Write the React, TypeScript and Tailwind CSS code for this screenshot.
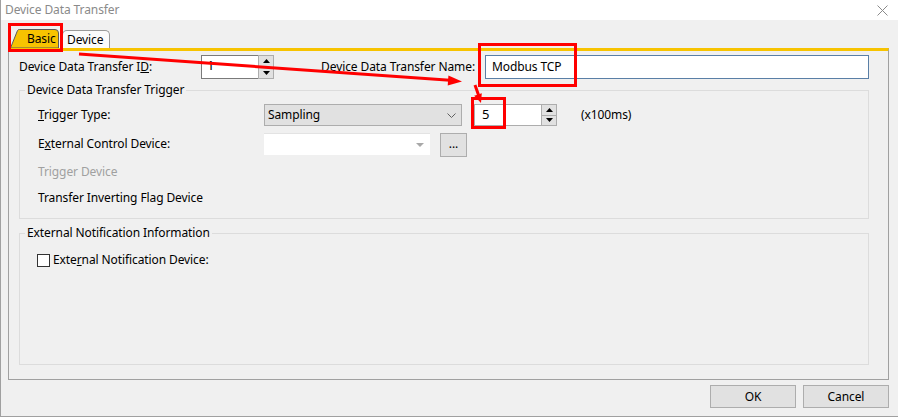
import React from "react"

const FONT = "font-['Segoe_UI','Noto_Sans',sans-serif] text-[12px] tracking-[-0.1px] text-black"

function SpinButtons() {
  return (
    <div className="flex h-full w-[16px] flex-col">
      {[0, 1].map((i) => (
        <div
          key={i}
          className="flex flex-1 items-center justify-center border border-[#adadad] bg-[#e1e1e1] first:border-b-0"
        >
          <svg width="7" height="4" viewBox="0 0 7 4">
            {i === 0 ? <polygon points="3.5,0 7,4 0,4" fill="#000" /> : <polygon points="0,0 7,0 3.5,4" fill="#000" />}
          </svg>
        </div>
      ))}
    </div>
  )
}

function SpinBox({ value, width }: { value: string; width: string }) {
  return (
    <div className={`flex h-[24px] ${width}`}>
      <div className="flex flex-1 items-center border border-r-0 border-[#7a7a7a] bg-white pb-[3px] pl-[5px] text-[13px]">
        {value}
      </div>
      <SpinButtons />
    </div>
  )
}

function BasicTab() {
  return (
    <div className="relative flex h-[19px] w-[49px] items-center pl-[17px]">
      <svg className="absolute inset-0" width="49" height="19" viewBox="0 0 49 19">
        <path d="M0.5 19 L7.5 1.5 Q8 0.5 9.5 0.5 L45 0.5 Q48.5 0.5 48.5 4 L48.5 19 Z" fill="#f7c300" stroke="#5a5a5a" strokeWidth="1" />
      </svg>
      <span className="relative">Basic</span>
    </div>
  )
}

function DeviceTab() {
  return (
    <div className="mt-[1px] flex h-[18px] w-[48px] items-center rounded-t-[5px] border border-b-0 border-[#9a9a9a] bg-[#fbfbfb] pl-[4px]">
      Device
    </div>
  )
}

function Group({ title, height, children }: { title: string; height: string; children: React.ReactNode }) {
  return (
    <fieldset className={`ml-[10px] w-[850px] border border-[#dcdcdc] ${height}`}>
      <legend className="ml-[5px] px-[2px] leading-[16px]">{title}</legend>
      {children}
    </fieldset>
  )
}

export default function App() {
  return (
    <div className={`relative h-[417px] w-[898px] overflow-hidden border-b border-l border-[#a0a0a0] bg-[#f0f0f0] ${FONT}`}>
      {/* title bar */}
      <div className="flex h-[20px] items-center justify-between bg-white pl-[4px] pr-[10px] text-[#8a8a8a]">
        <span>Device Data Transfer</span>
        <svg width="11" height="11" viewBox="0 0 11 11">
          <path d="M0.5 0.5 L10.5 10.5 M10.5 0.5 L0.5 10.5" stroke="#8a8a8a" strokeWidth="1" />
        </svg>
      </div>

      {/* tabs */}
      <div className="ml-[9px] mt-[9px] flex items-end gap-[3px]">
        <BasicTab />
        <DeviceTab />
      </div>

      {/* panel */}
      <div className="ml-[7px] h-[332px] w-[881px] border-x border-b border-t-[3px] border-x-[#a0a0a0] border-b-[#a0a0a0] border-t-[#f7c300]">
        <div className="mt-[4px] flex h-[24px] items-center">
          <div className="w-[192px] pl-[10px]">
            Device Data Transfer I<span className="underline">D</span>:
          </div>
          <SpinBox value="1" width="w-[73px]" />
          <div className="w-[201px] text-right">Device Data Transfer Name:</div>
          <div className="ml-[10px] flex h-[24px] w-[384px] items-center border border-[#5a7fa6] bg-white pl-[6px]">
            Modbus TCP
          </div>
        </div>

        <div className="mt-[3px]">
          <Group title="Device Data Transfer Trigger" height="h-[137px]">
            <div className="mt-[6px] flex h-[22px] items-center">
              <div className="w-[244px] pl-[18px]">
                <span className="underline">T</span>rigger Type:
              </div>
              <div className="flex h-[22px] w-[198px] items-center justify-between border border-[#adadad] bg-[#e1e1e1] pl-[3px] pr-[5px]">
                <span>Sampling</span>
                <svg width="9" height="5" viewBox="0 0 9 5">
                  <polyline points="0.5,0.5 4.5,4.5 8.5,0.5" fill="none" stroke="#606060" strokeWidth="1" />
                </svg>
              </div>
              <div className="ml-[12px] h-[22px]">
                <div className="flex h-[22px] w-[83px]">
                  <div className="flex flex-1 items-center border border-r-0 border-[#adadad] bg-white pl-[7px] text-[13px]">5</div>
                  <SpinButtons />
                </div>
              </div>
              <div className="ml-[24px]">(x100ms)</div>
            </div>

            <div className="mt-[7px] flex h-[24px] items-start">
              <div className="flex h-[22px] w-[244px] items-center pl-[18px]">
                E<span className="underline">x</span>ternal Control Device:
              </div>
              <div className="flex h-[22px] w-[166px] items-center justify-end border-t border-[#e3e3e3] bg-white pr-[6px]">
                <svg width="8" height="4" viewBox="0 0 8 4">
                  <polygon points="0,0 8,0 4,4" fill="#a8a8a8" />
                </svg>
              </div>
              <div className="ml-[10px] flex h-[24px] w-[27px] items-center justify-center border border-[#adadad] bg-[#e1e1e1] pb-[2px]">
                ...
              </div>
            </div>

            <div className="mt-[4px] flex h-[22px] items-center pl-[18px] text-[#a0a0a0]">Trigger Device</div>
            <div className="mt-[4px] flex h-[22px] items-center pl-[18px]">Transfer Inverting Flag Device</div>
          </Group>
        </div>

        <div className="mt-[6px]">
          <Group title="External Notification Information" height="h-[140px]">
            <div className="mt-[8px] flex h-[22px] items-center pl-[17px]">
              <div className="h-[13px] w-[13px] border border-[#333] bg-white" />
              <span className="ml-[3px]">
                Exte<span className="underline">r</span>nal Notification Device:
              </span>
            </div>
          </Group>
        </div>
      </div>

      {/* buttons */}
      <div className="mt-[5px] flex justify-end gap-[7px] pr-[9px]">
        <button className="flex h-[23px] w-[86px] items-center justify-center border border-[#adadad] bg-[#e1e1e1]">OK</button>
        <button className="flex h-[23px] w-[86px] items-center justify-center border border-[#adadad] bg-[#e1e1e1]">Cancel</button>
      </div>

      {/* annotation overlay */}
      <div className="pointer-events-none absolute left-[7px] top-[23px] h-[29px] w-[55px] border-[3px] border-[#ff0000]" />
      <div className="pointer-events-none absolute left-[477px] top-[43px] h-[44px] w-[99px] border-[3px] border-[#ff0000]" />
      <div className="pointer-events-none absolute left-[470px] top-[97px] h-[32px] w-[35px] border-[3px] border-[#ff0000]" />
      <svg className="pointer-events-none absolute left-0 top-0" width="898" height="418" viewBox="0 0 898 418">
        <line x1="78" y1="54" x2="449" y2="80.3" stroke="#ff0000" strokeWidth="3" />
        <polygon points="461,81.5 447.4,75.5 446.7,85.5" fill="#ff0000" />
        <line x1="474" y1="85" x2="477.5" y2="95" stroke="#ff0000" strokeWidth="3" />
        <polygon points="480,103 473.2,95.8 480.8,93.2" fill="#ff0000" />
      </svg>
    </div>
  )
}
